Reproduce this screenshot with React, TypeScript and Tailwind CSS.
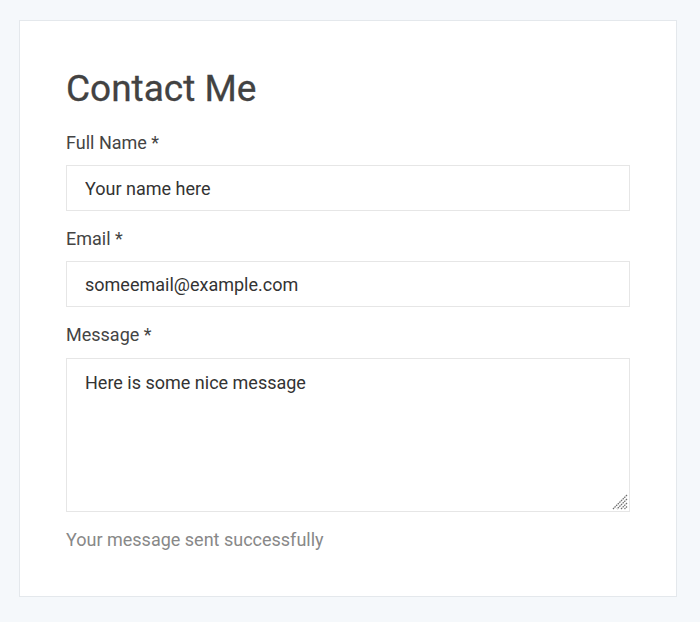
export default function App() {
  return (
    <div className="min-h-[622px] bg-[#f5f8fb] pt-5 pl-[19px] pr-[23px] pb-6 font-['Roboto',sans-serif]">
      <div className="w-[658px] border border-[#e4e8ec] bg-white px-[46px] pt-[46px] pb-[43px]">
        <h1 className="text-[37px] leading-[44px] text-[#424242] [-webkit-text-stroke:0.3px_#424242]">Contact Me</h1>

        <form className="mt-[19px]" onSubmit={(e) => e.preventDefault()}>
          <label className="block text-[18px] leading-[26px] text-[#444]">Full Name *</label>
          <input
            type="text"
            defaultValue="Your name here"
            className="mt-[9px] block h-[46px] w-full border border-[#e6e6e6] px-[18px] text-[18px] text-[#333] outline-none"
          />

          <label className="mt-[15px] block text-[18px] leading-[26px] text-[#444]">Email *</label>
          <input
            type="email"
            defaultValue="someemail@example.com"
            className="mt-[9px] block h-[46px] w-full border border-[#e6e6e6] px-[18px] text-[18px] text-[#333] outline-none"
          />

          <label className="mt-[15px] block text-[18px] leading-[26px] text-[#444]">Message *</label>
          <div className="relative mt-[10px]">
            <textarea
              defaultValue="Here is some nice message"
              className="block h-[154px] w-full resize-none border border-[#e6e6e6] px-[18px] py-[12px] text-[18px] leading-[24px] text-[#333] outline-none"
            />
            {/* resize grip */}
            <svg
              className="pointer-events-none absolute bottom-[2px] right-[2px]"
              width="16"
              height="16"
              viewBox="0 0 16 16"
            >
              <g stroke="#6f6f6f" strokeWidth="1.3" strokeDasharray="1.6 0.7">
                <line x1="15" y1="1" x2="1" y2="15" />
                <line x1="15" y1="5" x2="5" y2="15" />
                <line x1="15" y1="9" x2="9" y2="15" />
                <line x1="15" y1="12.5" x2="12.5" y2="15" />
              </g>
            </svg>
          </div>

          <p className="mt-[15px] text-[18px] leading-[26px] text-[#888]">Your message sent successfully</p>
        </form>
      </div>
    </div>
  );
}
